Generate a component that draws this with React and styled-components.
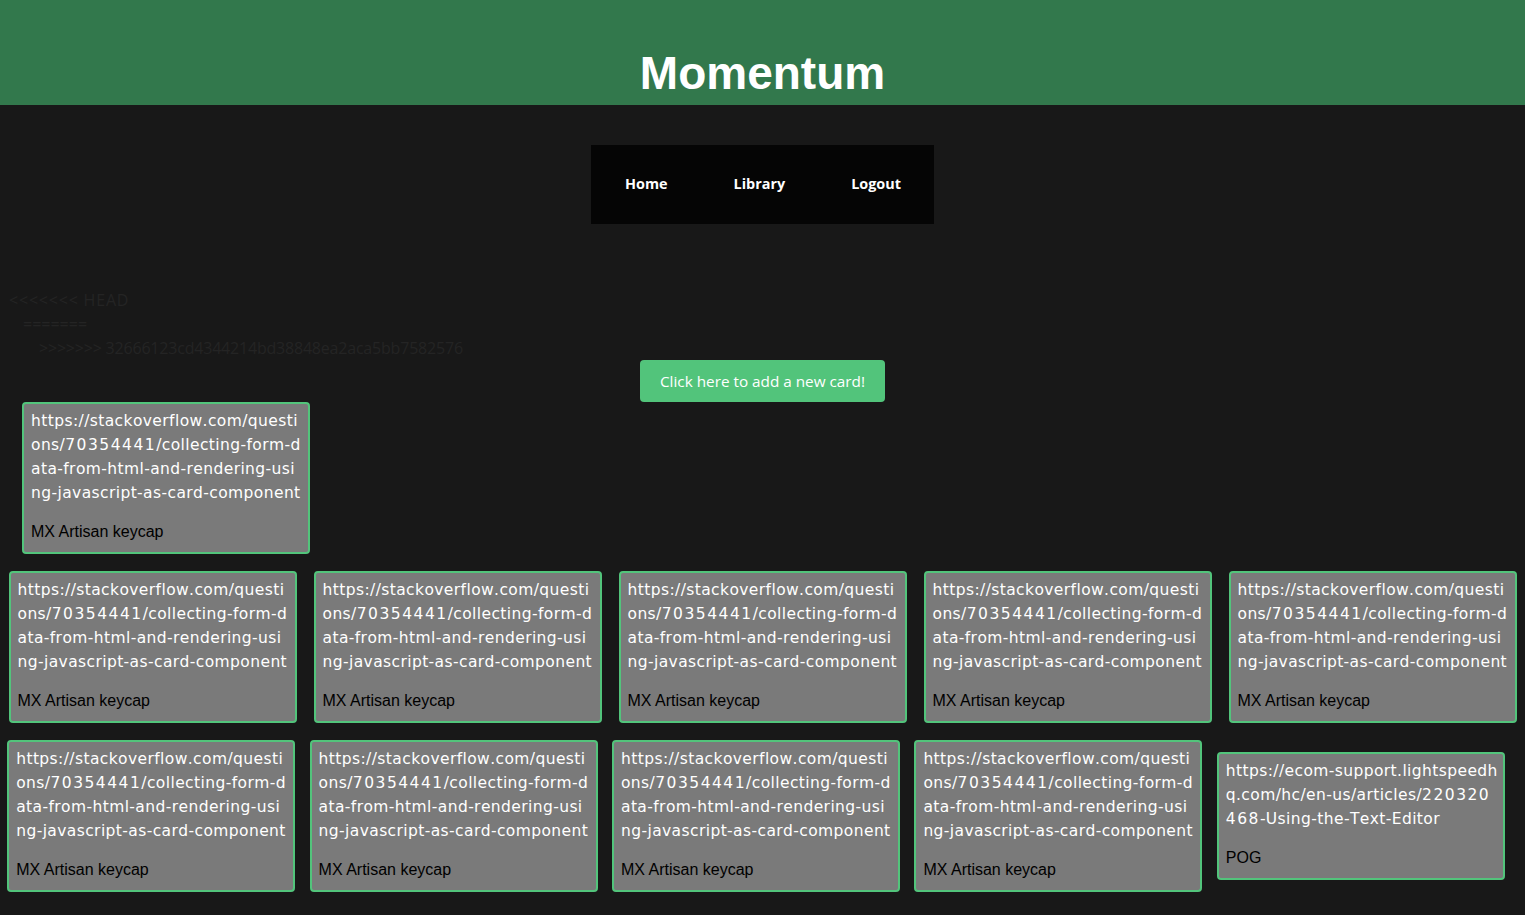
import React from 'react'
import styled, { createGlobalStyle } from 'styled-components'

const GlobalStyle = createGlobalStyle`
  html, body {
    margin: 0;
    padding: 0;
    background-color: #181818;
  }
  body {
    font-family: "Open Sans", "Noto Sans", sans-serif;
  }
`

const Header = styled.header`
  height: 105px;
  background-color: #32784c;
  display: flex;
  justify-content: center;
  align-items: flex-end;
`
const Title = styled.h1`
  margin: 0 0 4px 0;
  font-family: "Liberation Sans", Arial, sans-serif;
  font-size: 46px;
  font-weight: 700;
  line-height: 56px;
  color: white;
`
const NavWrap = styled.div`
  display: flex;
  justify-content: center;
  margin-top: 40px;
`
const Nav = styled.nav`
  display: flex;
  align-items: center;
  height: 79px;
  padding-left: 1px;
  background-color: #050505;
`
const NavLink = styled.a`
  padding: 0 33px 2px;
  color: white;
  font-size: 14.4px;
  font-weight: 700;
  text-decoration: none;
  cursor: pointer;
`
const Conflict = styled.div`
  margin-top: 64px;
  color: #242424;
  font-size: 16px;
  line-height: 24px;
`
const ConflictLine = styled.div`
  padding-left: ${p => p.indent}px;
  letter-spacing: ${p => p.spacing || 0}px;
`
const ButtonRow = styled.div`
  display: flex;
  justify-content: center;
`
const AddButton = styled.button`
  width: 245px;
  height: 42px;
  border: none;
  border-radius: 4px;
  background-color: #52c47b;
  color: white;
  font-family: "Open Sans", sans-serif;
  font-size: 15.3px;
  cursor: pointer;
`
const Single = styled.div`
  padding-left: 22px;
`
const Row = styled.div`
  display: grid;
  grid-template-columns: repeat(5, 1fr);
  justify-items: center;
  align-items: center;
  width: ${p => p.width}px;
  margin-top: 17px;
`
const Card = styled.div`
  box-sizing: border-box;
  width: 288px;
  border: 2px solid #52c47b;
  border-radius: 4px;
  background-color: #7a7a7a;
  padding: 5px 6px 10px 7px;
`
const Link = styled.div`
  width: 273px;
  color: white;
  font-family: "DejaVu Sans", sans-serif;
  font-size: 15.5px;
  font-kerning: none;
  letter-spacing: 0.4px;
  line-height: 24px;
  word-break: break-all;
`
const Digits = styled.span`
  letter-spacing: 1.5px;
`
const CardName = styled.div`
  margin-top: 17px;
  color: black;
  font-family: "Liberation Sans", Arial, sans-serif;
  font-size: 16px;
  line-height: 20px;
`

const SO = 'https://stackoverflow.com/questions/70354441/collecting-form-data-from-html-and-rendering-using-javascript-as-card-component'
const LS = 'https://ecom-support.lightspeedhq.com/hc/en-us/articles/220320468-Using-the-Text-Editor'

const row2 = [1, 2, 3, 4, 5].map(i => ({ id: i, url: SO, name: 'MX Artisan keycap' }))
const row3 = [
  ...[6, 7, 8, 9].map(i => ({ id: i, url: SO, name: 'MX Artisan keycap' })),
  { id: 10, url: LS, name: 'POG' },
]

// digits in the link font sit wider apart than the letters
const spaceDigits = text =>
  text.split(/(\d+)/).map((part, i) =>
    /^\d+$/.test(part) ? <Digits key={i}>{part}</Digits> : part
  )

const LinkCard = ({ url, name }) => (
  <Card>
    <Link>{spaceDigits(url)}</Link>
    <CardName>{name}</CardName>
  </Card>
)

const App = () => {
  return (
    <>
      <GlobalStyle />
      <Header>
        <Title>Momentum</Title>
      </Header>
      <NavWrap>
        <Nav>
          <NavLink>Home</NavLink>
          <NavLink>Library</NavLink>
          <NavLink>Logout</NavLink>
        </Nav>
      </NavWrap>
      <Conflict>
        <ConflictLine indent={9} spacing={0.8}>{'<<<<<<< HEAD'}</ConflictLine>
        <ConflictLine indent={23}>=======</ConflictLine>
        <ConflictLine indent={39} spacing={-0.2}>{'>>>>>>> 32666123cd4344214bd38848ea2aca5bb7582576'}</ConflictLine>
      </Conflict>
      <ButtonRow>
        <AddButton>Click here to add a new card!</AddButton>
      </ButtonRow>
      <Single>
        <LinkCard url={SO} name="MX Artisan keycap" />
      </Single>
      <Row width={1525}>
        {row2.map(c => <LinkCard key={c.id} {...c} />)}
      </Row>
      <Row width={1512}>
        {row3.map(c => <LinkCard key={c.id} {...c} />)}
      </Row>
    </>
  )
}

export default App
